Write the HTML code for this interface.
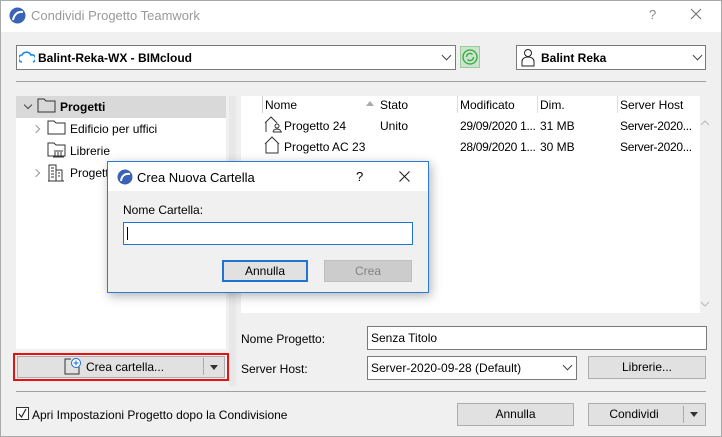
<!DOCTYPE html>
<html><head><style>
*{box-sizing:border-box;margin:0;padding:0}
body{width:722px;height:437px;overflow:hidden;font-family:"Liberation Sans",sans-serif;font-size:12px;color:#000;background:#f0f0f0;position:relative}
.a{position:absolute}
.win{left:0;top:0;width:722px;height:437px;border:1px solid #aaa;background:#f0f0f0}
.btn{position:absolute;background:#e1e1e1;border:1px solid #adadad;text-align:center;line-height:20px}
.combo{position:absolute;background:#fff;border:1px solid #7a7a7a}
.chev{position:absolute;width:7px;height:7px;border-right:1px solid #444;border-bottom:1px solid #444;transform:rotate(45deg)}
.tri{position:absolute;width:0;height:0;border-left:4px solid transparent;border-right:4px solid transparent;border-top:5px solid #333}
.t{letter-spacing:-0.3px}
</style></head><body>
<div class="a win"></div>
<div class="a" style="left:1px;top:1px;width:720px;height:31px;background:#fff"></div>
<svg class="a" style="left:9px;top:7px" width="17" height="17"><circle cx="8.5" cy="8.5" r="8" fill="#3a63b8"/><path d="M4 13 Q6 4 14 5" stroke="#fff" stroke-width="2" fill="none"/></svg>
<div class="a" style="left:31px;top:8px;font-size:13px;color:#999">Condividi Progetto Teamwork</div>
<div class="a" style="left:649px;top:7px;font-size:13px;color:#888">?</div>
<svg class="a" style="left:690px;top:8px" width="12" height="12"><path d="M1 1L11 11M11 1L1 11" stroke="#777" stroke-width="1.2"/></svg>

<div class="combo" style="left:16px;top:45px;width:440px;height:25px"></div>
<svg class="a" style="left:19px;top:51px" width="16" height="12"><path d="M3 11 A3.5 3.5 0 0 1 3 4 A5 5 0 0 1 12 4 A3 3 0 0 1 14 11" stroke="#1a8ae8" stroke-width="1.6" fill="none"/></svg>
<div class="a" style="left:38px;top:51px;font-weight:bold">Balint-Reka-WX - BIMcloud</div>
<div class="chev" style="left:443px;top:52px"></div>
<div class="a" style="left:460px;top:46px;width:20px;height:22px;background:#cde3cd;border:1px solid #9c9"></div>
<svg class="a" style="left:462px;top:49px" width="16" height="16"><circle cx="8" cy="8" r="7" fill="none" stroke="#2eaa3a" stroke-width="1.3"/><path d="M4.5 8a3.5 3.5 0 0 1 6-2.5M11.5 8a3.5 3.5 0 0 1-6 2.5" stroke="#2eaa3a" stroke-width="1.3" fill="none"/></svg>
<div class="combo" style="left:516px;top:45px;width:190px;height:25px"></div>
<svg class="a" style="left:521px;top:48px" width="14" height="19"><circle cx="7" cy="5" r="3.5" fill="none" stroke="#222"/><path d="M1 18V13a6 4 0 0 1 12 0V18z" fill="none" stroke="#222"/></svg>
<div class="a" style="left:541px;top:51px;font-weight:bold">Balint Reka</div>
<div class="chev" style="left:694px;top:52px"></div>
<div class="a" style="left:16px;top:81px;width:690px;height:1px;background:#a0a0a0"></div>

<div class="a" style="left:16px;top:96px;width:210px;height:253px;background:#fff"></div>
<div class="a" style="left:229px;top:96px;width:7px;height:290px;background:#e8e8e8"></div>
<div class="a" style="left:16px;top:96px;width:210px;height:22px;background:#d9d9d9"></div>
<div class="chev" style="left:25px;top:102px;width:6px;height:6px"></div>
<svg class="a" style="left:37px;top:97px" width="20" height="17"><path d="M1 2h6l2 2h9v11H1z" fill="none" stroke="#333"/></svg>
<div class="a" style="left:60px;top:100px;font-weight:bold">Progetti</div>
<div class="chev" style="left:33px;top:126px;width:6px;height:6px;transform:rotate(-45deg);border-color:#999"></div>
<svg class="a" style="left:47px;top:119px" width="20" height="17"><path d="M1 2h6l2 2h9v11H1z" fill="none" stroke="#333"/></svg>
<div class="a" style="left:70px;top:122px">Edificio per uffici</div>
<svg class="a" style="left:47px;top:141px" width="20" height="18"><path d="M1 2h6l2 2h9v11H1z" fill="none" stroke="#333"/><path d="M7 10h9M8 11v4M11 11v4M14 11v4M6 16h11" stroke="#333"/></svg>
<div class="a" style="left:70px;top:144px">Librerie</div>
<div class="chev" style="left:33px;top:170px;width:6px;height:6px;transform:rotate(-45deg);border-color:#999"></div>
<svg class="a" style="left:48px;top:164px" width="16" height="18"><path d="M1 17V1h7v16M8 6h6v11M0 17h16M3 4h3M3 7h3M3 10h3M3 13h3M10 9h2M10 12h2" stroke="#333" fill="none"/></svg>
<div class="a" style="left:70px;top:166px">Progett</div>

<div class="a" style="left:241px;top:96px;width:459px;height:217px;background:#fff"></div>
<div class="a" style="left:262px;top:96px;width:1px;height:17px;background:#ccc"></div>
<div class="a" style="left:265px;top:98px">Nome</div>
<div class="a" style="left:366px;top:101px;border-left:4px solid transparent;border-right:4px solid transparent;border-bottom:5px solid #aaa"></div>
<div class="a" style="left:380px;top:98px">Stato</div>
<div class="a" style="left:457px;top:96px;width:1px;height:17px;background:#ddd"></div>
<div class="a" style="left:460px;top:98px">Modificato</div>
<div class="a" style="left:537px;top:96px;width:1px;height:17px;background:#ddd"></div>
<div class="a" style="left:540px;top:98px">Dim.</div>
<div class="a" style="left:617px;top:96px;width:1px;height:17px;background:#ddd"></div>
<div class="a" style="left:620px;top:98px">Server Host</div>
<svg class="a" style="left:264px;top:115px" width="20" height="18"><path d="M1 8L7 2l6 6M2 7v10M9 17h9" stroke="#333" fill="none"/><circle cx="13" cy="11" r="2" fill="none" stroke="#333"/><path d="M9 17a4 3 0 0 1 8 0" stroke="#333" fill="none"/></svg>
<div class="a" style="left:284px;top:119px">Progetto 24</div>
<div class="a" style="left:380px;top:119px">Unito</div>
<div class="a t" style="left:460px;top:119px">29/09/2020 1...</div>
<div class="a" style="left:540px;top:119px">31 MB</div>
<div class="a t" style="left:620px;top:119px">Server-2020...</div>
<svg class="a" style="left:264px;top:136px" width="16" height="18"><path d="M1 8L8 1l7 7M2 7v10h12V7" stroke="#333" fill="none"/></svg>
<div class="a" style="left:284px;top:140px">Progetto AC 23</div>
<div class="a t" style="left:460px;top:140px">28/09/2020 1...</div>
<div class="a" style="left:540px;top:140px">30 MB</div>
<div class="a t" style="left:620px;top:140px">Server-2020...</div>
<svg class="a" style="left:700px;top:120px" width="10" height="6"><path d="M1 5L5 1l4 4" stroke="#bbb" fill="none"/></svg>
<svg class="a" style="left:700px;top:301px" width="10" height="6"><path d="M1 1l4 4 4-4" stroke="#bbb" fill="none"/></svg>

<div class="a" style="left:13px;top:353px;width:216px;height:28px;border:2px solid #e81010"></div>
<div class="btn" style="left:17px;top:356px;width:208px;height:22px"></div>
<div class="a" style="left:203px;top:358px;width:1px;height:17px;background:#aaa"></div>
<div class="tri" style="left:210px;top:365px"></div>
<svg class="a" style="left:64px;top:357px" width="18" height="18"><path d="M7 2H1v15h14v-7" stroke="#333" fill="none"/><circle cx="12" cy="6" r="4.5" fill="#fff" stroke="#1a6ed8"/><path d="M12 3.5v5M9.5 6h5" stroke="#1a6ed8"/></svg>
<div class="a" style="left:86px;top:360px">Crea cartella...</div>

<div class="a" style="left:241px;top:332px">Nome Progetto:</div>
<div class="combo" style="left:367px;top:326px;width:340px;height:24px"></div>
<div class="a" style="left:371px;top:331px">Senza Titolo</div>
<div class="a" style="left:241px;top:362px">Server Host:</div>
<div class="combo" style="left:367px;top:356px;width:210px;height:24px"></div>
<div class="a" style="left:371px;top:361px">Server-2020-09-28 (Default)</div>
<div class="chev" style="left:564px;top:362px"></div>
<div class="btn" style="left:588px;top:356px;width:118px;height:23px">Librerie...</div>

<div class="a" style="left:16px;top:391px;width:690px;height:1px;background:#a0a0a0"></div>
<div class="a" style="left:16px;top:407px;width:13px;height:13px;background:#fff;border:1px solid #333"></div>
<svg class="a" style="left:17px;top:408px" width="11" height="11"><path d="M2 6l2.5 3L9 1" stroke="#222" stroke-width="1.2" fill="none"/></svg>
<div class="a" style="left:32px;top:408px">Apri Impostazioni Progetto dopo la Condivisione</div>
<div class="btn" style="left:457px;top:403px;width:117px;height:23px">Annulla</div>
<div class="btn" style="left:588px;top:403px;width:118px;height:23px"><span style="margin-right:26px">Condividi</span></div>
<div class="a" style="left:683px;top:406px;width:1px;height:17px;background:#aaa"></div>
<div class="tri" style="left:690px;top:412px"></div>

<div class="a" style="left:107px;top:161px;width:322px;height:132px;background:#f0f0f0;border:1px solid #2b7bd6;box-shadow:2px 3px 10px rgba(0,0,0,.3)"></div>
<div class="a" style="left:108px;top:162px;width:320px;height:29px;background:#fff"></div>
<svg class="a" style="left:117px;top:169px" width="16" height="16"><circle cx="8" cy="8" r="7.5" fill="#3a63b8"/><path d="M4 12 Q5 4 13 5" stroke="#fff" stroke-width="2" fill="none"/></svg>
<div class="a" style="left:137px;top:170px;font-size:13px">Crea Nuova Cartella</div>
<div class="a" style="left:356px;top:169px;font-size:13px">?</div>
<svg class="a" style="left:399px;top:171px" width="11" height="11"><path d="M0.5 0.5L10.5 10.5M10.5 0.5L0.5 10.5" stroke="#222" stroke-width="1.1"/></svg>
<div class="a" style="left:123px;top:203px">Nome Cartella:</div>
<div class="a" style="left:123px;top:222px;width:290px;height:23px;background:#fff;border:1px solid #1e74d0"></div>
<div class="a" style="left:127px;top:227px;width:1px;height:13px;background:#000"></div>
<div class="a" style="left:222px;top:260px;width:86px;height:22px;background:#e1e1e1;border:2px solid #1e74d0;text-align:center;line-height:18px">Annulla</div>
<div class="a" style="left:324px;top:260px;width:88px;height:22px;background:#ccc;border:1px solid #bfbfbf;text-align:center;line-height:20px;color:#838383">Crea</div>
</body></html>
